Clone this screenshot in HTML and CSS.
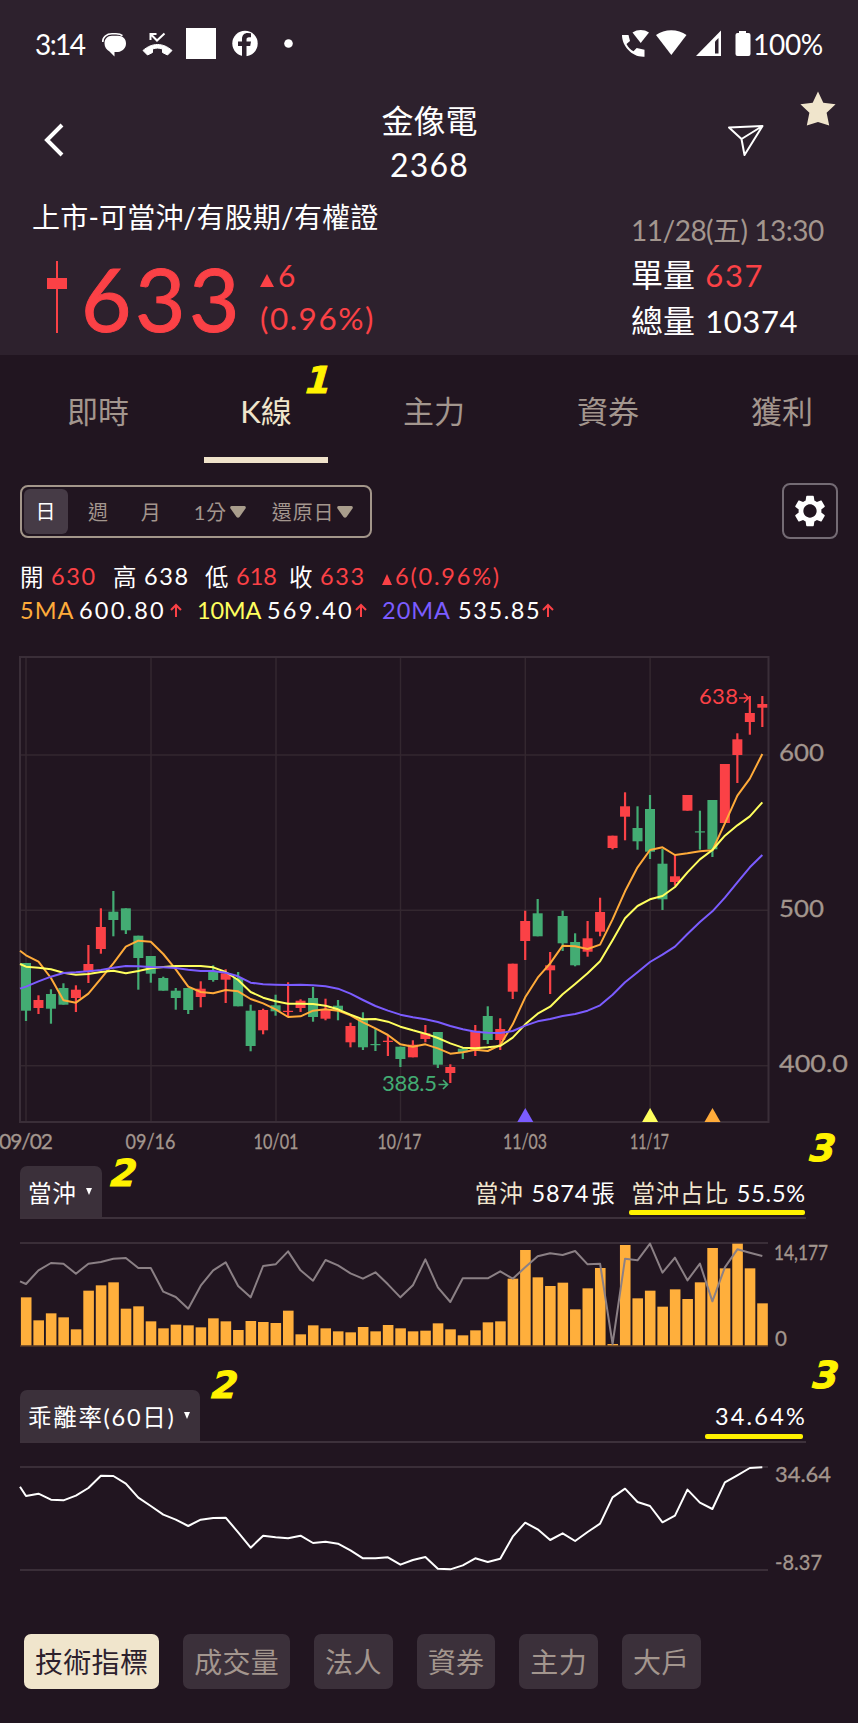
FILE: index.html
```html
<!DOCTYPE html>
<html lang="zh-Hant">
<head>
    <meta charset="UTF-8">
    <meta name="viewport" content="width=device-width, initial-scale=1.0">
    <title>金像電 2368</title>
    <link rel="stylesheet" href="styles.css">
</head>
<body>
    <div class="app">
        <header class="header">
            <div class="status-bar">
                <span class="clock">3:14</span>
                <svg class="status-left" width="200" height="34" viewBox="98 28 200 34">
                    <path d="M102.800 43c-.5-5 4-8.200 9.200-8.200h4c3 0 5 .6 6.500 1.800" fill="none" stroke="#fff" stroke-width="1.600"/>
                    <path d="M112 36.800h6c5 0 8 3.200 8 7.700s-3.500 8-8 8.500h-3.500v4.500l-5-5c-3-1.500-5-4.500-5-8 0-4.500 3-7.700 7.500-7.700z" fill="#fff"/>
                    <path d="M143 51.500c9-8 20-8 29 0l-4.500 4.500-5-2.500v-3.500c-3.500-1.200-6.500-1.200-10 0v3.500l-5 2.500z" fill="#fff" stroke="#fff" stroke-width="1"/>
                    <path d="M150.500 41v-6h6M151 35.500l6 6 7.500-7" fill="none" stroke="#fff" stroke-width="2"/>
                    <rect x="186" y="29" width="30" height="31" fill="#fff"/>
                    <circle cx="245" cy="44.500" r="12.700" fill="#fff"/>
                    <path d="M242 58V47h-4v-4.500h4v-2.500c0-4 2.500-6 5.500-6l3.500.3v4h-2c-1.800 0-2.500 1-2.500 2.200v2h4.500l-.8 4.500h-3.700v11z" fill="#2d212d"/>
                    <circle cx="288.500" cy="44.500" r="4.300" fill="#fff"/>
                </svg>
                <svg class="status-right" width="132" height="34" viewBox="620 28 132 34">
                    <path d="M622 36h6.500l1.500 6-3.500 3c1.500 3.300 4 5.800 7 7.300l3.200-3.300 7.800 1.700v7C632 58.500 622 47 622 36z" fill="#fff"/>
                    <path d="M632.500 33.500c5-3.300 11.500-3.300 16.500 0L640.700 44z" fill="#fff"/>
                    <path d="M656 36c8.500-6.300 22-6.300 30.500 0L671.300 56z" fill="#fff"/>
                    <path d="M696 57l25-25.500V57z" fill="#fff"/>
                    <path d="M715 42.500l3.500-3.500v15.500H715z" fill="#2d212d"/>
                    <path d="M739 32h7v2h2.500q2 0 2 2v19q0 2-2 2h-11q-2 0-2-2V36q0-2 2-2h1.500z" fill="#fff"/>
                </svg>
                <span class="battery">100%</span>
            </div>

            <div class="title-bar">
                <svg class="icon-back" width="24" height="36" viewBox="0 0 24 36">
                    <path d="M20 3L5 18l15 15" fill="none" stroke="#fff" stroke-width="4"/>
                </svg>
                <h1 class="title">金像電<span class="code">2368</span></h1>
                <svg class="icon-send" width="38" height="34" viewBox="0 0 38 34">
                    <path d="M2 3.500L35.500 2 17.500 31 14.500 15zM14.500 15L35.500 2" fill="none" stroke="#fff" stroke-width="2" stroke-linejoin="round"/>
                </svg>
                <svg class="icon-star" width="36" height="36" viewBox="0 0 36 36">
                    <path d="M18 .5l5.300 11.300 12.300 1.400-9 8.500 2.600 12.800L18 31 6.800 34.500l2.600-12.800-9-8.500 12.300-1.400z" fill="#f0e5cc"/>
                </svg>
            </div>

            <div class="quote">
                <div class="quote-main">
                    <div class="market">上市-可當沖/有股期/有權證</div>
                    <div class="price-row">
                        <svg class="price-candle" width="20" height="72" viewBox="0 0 20 72">
                            <path d="M9 0h2v72H9zM0 17h20v11H0z" fill="#fb4146"/>
                        </svg>
                        <span class="price">633</span>
                        <div class="change">
                            <div class="change-value"><i class="tri-up"></i>6</div>
                            <div class="change-rate">(0.96%)</div>
                        </div>
                    </div>
                </div>
                <div class="quote-side">
                    <div class="date">11/28(五) 13:30</div>
                    <div class="volume">單量 <span class="num single up">637</span></div>
                    <div class="volume">總量 <span class="num">10374</span></div>
                </div>
            </div>
        </header>

        <nav class="tabs">
            <span class="tab">即時</span>
            <span class="tab active">K線</span>
            <span class="tab">主力</span>
            <span class="tab">資券</span>
            <span class="tab">獲利</span>
        </nav>
        <span class="note note-kline">1</span>

        <div class="toolbar">
            <div class="periods">
                <span class="period selected">日</span>
                <span class="period">週</span>
                <span class="period">月</span>
                <span class="period minute">1分<svg width="16" height="12" viewBox="0 0 16 12"><path d="M1.500 0h13q2 .5 1 2.500L9.500 11q-1.500 1.500-3 0L.5 2.500Q-.5.500 1.500 0z"/></svg></span>
                <span class="period">還原日<svg width="16" height="12" viewBox="0 0 16 12"><path d="M1.500 0h13q2 .5 1 2.500L9.500 11q-1.500 1.500-3 0L.5 2.500Q-.5.500 1.500 0z"/></svg></span>
            </div>
            <div class="settings">
                <svg width="38" height="38" viewBox="0 0 24 24"><path fill="#fff" d="M19.140 12.940c.04-.3.060-.61.060-.94 0-.32-.02-.64-.07-.94l2.030-1.580c.18-.14.23-.41.120-.61l-1.920-3.320c-.12-.22-.37-.29-.59-.22l-2.390.96c-.5-.38-1.030-.7-1.620-.94l-.36-2.540c-.04-.24-.24-.41-.48-.41h-3.840c-.24 0-.43.170-.47.410l-.36 2.540c-.59.240-1.130.570-1.620.940l-2.390-.96c-.22-.08-.47 0-.59.220L2.740 8.870c-.12.210-.08.470.120.610l2.030 1.580c-.05.300-.09.630-.09.940s.020.640.070.940l-2.030 1.580c-.18.140-.23.410-.12.610l1.920 3.320c.12.220.37.290.59.220l2.390-.96c.5.380 1.030.700 1.620.940l.36 2.540c.05.240.24.410.48.410h3.840c.24 0 .44-.17.470-.41l.36-2.540c.59-.24 1.130-.56 1.620-.94l2.390.96c.22.080.47 0 .59-.22l1.920-3.320c.12-.22.070-.47-.12-.61l-2.010-1.580zM12 16.200c-2.300 0-4.200-1.900-4.200-4.200s1.900-4.200 4.200-4.200 4.200 1.900 4.200 4.200-1.900 4.200-4.200 4.200z"/></svg>
            </div>
        </div>

        <div class="legend">
            <div class="ohlc">
                <span>開</span><span class="up">630</span>
                <span>高</span><span>638</span>
                <span>低</span><span class="up tight">618</span>
                <span>收</span><span class="up">633</span>
                <span class="up diff"><i class="tri-up small"></i>6(0.96%)</span>
            </div>
            <div class="ma">
                <span class="ma5">5MA</span><span class="value">600.80</span><svg width="12" height="15" viewBox="0 0 12 15"><path d="M6 14V2M1 7l5-5 5 5"/></svg>
                <span class="ma10">10MA</span><span class="value">569.40</span><svg width="12" height="15" viewBox="0 0 12 15"><path d="M6 14V2M1 7l5-5 5 5"/></svg>
                <span class="ma20">20MA</span><span>535.85</span><svg width="12" height="15" viewBox="0 0 12 15"><path d="M6 14V2M1 7l5-5 5 5"/></svg>
            </div>
        </div>

        <svg class="chart" id="kline" width="858" height="520" viewBox="0 640 858 520">
            <path class="grid" d="M20 755H769M20 910.300H769M20 1065.700H769M26 657V1122M151 657V1122M276 657V1122M400.500 657V1122M525.300 657V1122M650.100 657V1122"/>
            <rect class="frame" x="20" y="657" width="748.500" height="465"/>
            <g id="candles"></g>
            <path class="line ma5" id="ma5"/>
            <path class="line ma10" id="ma10"/>
            <path class="line ma20" id="ma20"/>
            <path d="M525.300 1108l8 14h-16z" fill="#7b5cff"/>
            <path d="M650.100 1108l8 14h-16z" fill="#ffff5e"/>
            <path d="M712.500 1108l8 14h-16z" fill="#ffab3a"/>
            <text class="mark up" x="699" y="704" textLength="39">638</text>
            <path class="arrow-red" d="M739 698h9M744 693.500l4.500 4.500-4.500 4.500"/>
            <text class="mark low" x="382" y="1091" textLength="55">388.5</text>
            <path class="arrow-green" d="M438.500 1084.500h9M443 1080l4.500 4.500-4.500 4.500"/>
            <g class="axis price-axis">
                <text x="779" y="761" textLength="45" lengthAdjust="spacingAndGlyphs">600</text>
                <text x="779" y="917" textLength="45" lengthAdjust="spacingAndGlyphs">500</text>
                <text x="779" y="1072" textLength="69" lengthAdjust="spacingAndGlyphs">400.0</text>
            </g>
            <g class="axis date-axis">
                <text x="-1" y="1149" textLength="54">09/02</text>
                <text x="125.500" y="1149" textLength="50" lengthAdjust="spacingAndGlyphs">09/16</text>
                <text x="253.500" y="1149" textLength="45" lengthAdjust="spacingAndGlyphs">10/01</text>
                <text x="377.500" y="1149" textLength="44" lengthAdjust="spacingAndGlyphs">10/17</text>
                <text x="503" y="1149" textLength="44" lengthAdjust="spacingAndGlyphs">11/03</text>
                <text x="630" y="1149" textLength="39" lengthAdjust="spacingAndGlyphs">11/17</text>
            </g>
        </svg>
        <span class="note note-price">3</span>

        <div class="panel-head">
            <div class="selector">當沖<i class="tri-down"></i></div>
            <div class="readout">
                <span class="label">當沖</span><span class="count">5874<b>張</b></span>
                <span class="marked day-ratio"><span class="label">當沖占比</span><span>55.5%</span></span>
            </div>
            <span class="note note-day">2</span>
        </div>
        <svg class="chart" width="858" height="171" viewBox="0 1219 858 171">
            <path class="frame" d="M20 1243H768"/>
            <path d="M20 1346H768" stroke="#5b3d28" stroke-width="1.500"/>
            <g id="bars"></g>
            <path class="line ratio" id="ratio"/>
            <g class="axis sub-axis">
                <text x="774" y="1260" textLength="54" lengthAdjust="spacingAndGlyphs">14,177</text>
                <text x="775" y="1346">0</text>
            </g>
        </svg>

        <div class="panel-head">
            <div class="selector wide">乖離率(60日)<i class="tri-down"></i></div>
            <div class="readout"><span class="marked bias-ratio">34.64%</span></div>
            <span class="note note-bias">2</span>
            <span class="note note-bias-value">3</span>
        </div>
        <svg class="chart" width="858" height="191" viewBox="0 1443 858 191">
            <path class="frame" d="M20 1467H768M20 1570H768"/>
            <path class="line bias" id="bias"/>
            <g class="axis sub-axis">
                <text x="775" y="1482" textLength="56" lengthAdjust="spacingAndGlyphs">34.64</text>
                <text x="775" y="1570" textLength="47" lengthAdjust="spacingAndGlyphs">-8.37</text>
            </g>
        </svg>

        <div class="chips">
            <span class="chip on">技術指標</span>
            <span class="chip">成交量</span>
            <span class="chip">法人</span>
            <span class="chip">資券</span>
            <span class="chip">主力</span>
            <span class="chip">大戶</span>
        </div>
    </div>
    <script src="script.js"></script>
</body>
</html>
```
FILE: styles.css
```css
body {
    margin: 0;
    background: #211520;
    color: #fff;
    font-family: Lato, "Noto Sans CJK TC", sans-serif;
}
.app {
    position: relative;
    width: 858px;
    height: 1723px;
    overflow: hidden;
}
.up {
    color: #fb4146;
}

/* header */
.header {
    height: 355px;
    background: #2d212d;
}
.status-bar {
    display: flex;
    align-items: center;
    height: 88px;
    padding: 0 0 0 35px;
    box-sizing: border-box;
}
.clock {
    width: 63px;
    font-size: 28px;
    letter-spacing: -1.6px;
}
.status-right {
    margin-left: 322px;
}
.battery {
    margin-left: 1px;
    font-size: 28px;
    letter-spacing: -0.3px;
}
.title-bar {
    position: relative;
    display: flex;
    align-items: center;
    justify-content: space-between;
    height: 104px;
    padding: 0 93px 0 42px;
}
.icon-send {
    margin-top: 1px;
}
.title {
    margin: 0 0 0 66px;
    padding-top: 5px;
    font-size: 32px;
    font-weight: 400;
    line-height: 44px;
    text-align: center;
}
.code {
    display: block;
    letter-spacing: 1.2px;
}
.icon-star {
    position: absolute;
    left: 800px;
    top: 3px;
}
.quote {
    display: flex;
    justify-content: space-between;
    height: 163px;
    padding: 0 0 0 32px;
}
.market {
    height: 50px;
    font-size: 28px;
    line-height: 50px;
    letter-spacing: 0.2px;
    white-space: nowrap;
}
.price-row {
    display: flex;
    align-items: center;
    height: 110px;
    padding-left: 15px;
}
.price {
    margin: 3px 0 0 14px;
    width: 161px;
    font-size: 87px;
    line-height: 100px;
    letter-spacing: 3.5px;
    color: #fb4146;
    -webkit-text-stroke: 1px #fb4146;
}
.change {
    margin-left: 18px;
    color: #fb4146;
    line-height: 43px;
}
.change-value {
    font-size: 30px;
}
.change-rate {
    font-size: 31.5px;
    letter-spacing: 1.5px;
}
.tri-up {
    display: inline-block;
    margin-right: 4px;
    border: solid transparent;
    border-width: 0 7px 13px;
    border-bottom-color: #fb4146;
}
.tri-up.small {
    border-width: 0 5px 11px;
    margin-right: 3px;
}
.quote-side {
    width: 227px;
    padding-top: 16px;
}
.date {
    height: 44px;
    font-size: 28px;
    line-height: 44px;
    letter-spacing: -0.5px;
    color: #a3968e;
    white-space: nowrap;
}
.volume {
    height: 46px;
    font-size: 32px;
    line-height: 46px;
}
.volume .num {
    margin-left: 2px;
    font-size: 31px;
    letter-spacing: 0.6px;
}
.volume .single {
    letter-spacing: 1.7px;
}

/* tabs */
.tabs {
    display: flex;
    gap: 44px;
    height: 108px;
    padding-left: 36px;
    font-size: 31px;
    line-height: 112px;
    color: #a3968e;
}
.tab {
    flex: none;
    width: 124px;
    text-align: center;
    box-sizing: border-box;
}
.tab:nth-child(n+4) {
    margin-left: 6px;
}
.tab.active {
    color: #f0e5cc;
    border-bottom: 6px solid #f0e2ca;
}

/* toolbar */
.toolbar {
    display: flex;
    justify-content: space-between;
    align-items: center;
    padding: 20px 20px 0;
}
.periods {
    display: flex;
    align-items: center;
    width: 352px;
    height: 53px;
    padding: 2px;
    border: 2px solid #a3968a;
    border-radius: 8px;
    box-sizing: border-box;
    font-size: 20px;
    letter-spacing: 0.8px;
    color: #a3968e;
}
.period {
    flex: none;
    margin-right: 32px;
    white-space: nowrap;
}
.period.minute {
    margin-right: 26px;
}
.period.selected {
    width: 44px;
    height: 45px;
    margin-right: 20px;
    border-radius: 6px;
    background: #463b46;
    color: #fff;
    line-height: 45px;
    text-align: center;
}
.period svg {
    margin-left: 3px;
    fill: #a99d8c;
    vertical-align: 2px;
}
.settings {
    display: flex;
    align-items: center;
    justify-content: center;
    width: 52px;
    height: 52px;
    border: 2px solid #746b74;
    border-radius: 8px;
}

/* legend */
.legend {
    height: 101px;
    font-size: 23.5px;
    letter-spacing: 1.6px;
}
.ohlc, .ma {
    display: grid;
    align-items: center;
    height: 34px;
    padding-left: 20px;
    white-space: nowrap;
}
.ohlc {
    grid-template-columns: 31px 62px 31px 61px 31px 53px 31px 62px auto;
    padding-top: 20px;
}
.ohlc .tight {
    letter-spacing: 0;
}
.ohlc .diff {
    letter-spacing: 1.8px;
}
.ma {
    grid-template-columns: 59px 91px 27px 70px 88px 27px 76px 84px auto;
}
.ma .ma5 {
    letter-spacing: 1px;
}
.ma .ma10 {
    letter-spacing: -0.2px;
}
.ma .ma20 {
    letter-spacing: 1px;
}
.ma .value {
    letter-spacing: 2.2px;
}
.ma svg {
    fill: none;
    stroke: #fb4146;
    stroke-width: 2;
}
.ma5 { color: #ffab3a; }
.ma10 { color: #ffff5e; }
.ma20 { color: #7b5cff; }

/* charts */
.chart {
    display: block;
}
.grid {
    stroke: #33272f;
    stroke-width: 1.5;
}
.frame {
    fill: none;
    stroke: #3a2e38;
    stroke-width: 2;
}
.line {
    fill: none;
    stroke: currentColor;
    stroke-width: 2;
    stroke-linejoin: round;
}
.ratio { color: #8b8085; }
.bias { color: #fff; }
.red { fill: #fb4146; }
.green { fill: #43ac73; }
.bar { fill: #ffaf3c; }
.mark {
    font-size: 22px;
}
.mark.up { fill: #fb4146; }
.mark.low { fill: #43ac73; }
.arrow-red, .arrow-green {
    fill: none;
    stroke: #fb4146;
    stroke-width: 1.7;
}
.arrow-green { stroke: #43ac73; }
.axis {
    fill: #a3968e;
    stroke: #a3968e;
    stroke-width: 0.3;
}
.price-axis { font-size: 23.5px; }
.date-axis { font-size: 21px; }
.sub-axis { font-size: 20.5px; }

/* indicator panels */
.panel-head {
    position: relative;
    display: flex;
    justify-content: space-between;
    height: 51px;
    width: 786px;
    margin: 6px 0 0 20px;
    border-bottom: 2px solid #3d313b;
}
.chart + .panel-head {
    margin-top: 0;
}
.selector {
    display: flex;
    align-items: center;
    padding: 0 10px 0 8px;
    border-radius: 7px 7px 0 0;
    background: #3b303a;
    font-size: 23.5px;
    letter-spacing: 0.7px;
}
.selector.wide {
    letter-spacing: 1.7px;
}
.tri-down {
    margin-left: 10px;
    border: solid transparent;
    border-width: 7px 3.5px 0;
    border-top-color: #fff;
}
.wide .tri-down {
    margin-left: 9px;
}
.readout {
    display: flex;
    align-items: center;
    font-size: 23.5px;
    letter-spacing: 0.8px;
    white-space: nowrap;
}
.label {
    margin-right: 8px;
    color: #f0e5cc;
}
.count b {
    margin-left: 2px;
    font-weight: 400;
}
.marked {
    position: relative;
    margin-left: 16px;
}
.marked::after {
    content: "";
    position: absolute;
    left: -3px;
    right: 1px;
    bottom: -6px;
    height: 5px;
    border-radius: 2px;
    background: #fff200;
}
.bias-ratio {
    letter-spacing: 2.2px;
    margin-right: -1px;
}
.bias-ratio::after {
    left: -10px;
    right: 4px;
    bottom: -9px;
}

/* step numbers laid over the screen */
.note {
    position: absolute;
    color: #fff200;
    font: italic bold 37px/40px "DejaVu Sans", sans-serif;
    -webkit-text-stroke: 1px #fff200;
    transform: skewX(-5deg);
}
.note-kline { left: 306px; top: 361px; }
.note-price { left: 810px; top: 1129px; }
.note-day { left: 91px; top: -12px; }
.note-bias { left: 192px; top: -24px; }
.note-bias-value { left: 793px; top: -34px; }

/* bottom chips */
.chips {
    display: flex;
    gap: 24px;
    padding-left: 24px;
}
.chip {
    height: 55px;
    padding: 0 11px;
    border-radius: 7px;
    background: #3b303a;
    color: #a3968e;
    font-size: 28px;
    line-height: 57px;
    letter-spacing: 0.3px;
    white-space: nowrap;
}
.chip.on {
    background: #f0e5cc;
    color: #2d212d;
}
```
FILE: script.js
```js
const SVG_NS = 'http://www.w3.org/2000/svg';
const STEP = 12.48;
const xAt = i => 26 + i * STEP;

// [wick top, body top, body bottom, wick bottom, r = up / g = down]
const candles = [
    [963, 963, 1010.7, 1021, 'g'], [995.3, 1000, 1008, 1014, 'r'], [989.3, 994, 1008.7, 1023.7, 'g'],
    [983.3, 988, 1004.7, 1004.7, 'g'], [985.3, 989.7, 998, 1012, 'r'], [945, 964, 972, 983, 'r'],
    [908.3, 927, 949, 953.7, 'r'], [891, 911.7, 920, 936.3, 'g'], [908.3, 908.3, 930.3, 934, 'g'],
    [935.7, 935.7, 958, 989.7, 'g'], [956, 956, 973.7, 982.7, 'g'], [976.7, 978, 990.7, 990.7, 'g'],
    [988, 990.7, 998, 1009.7, 'g'], [988, 988, 1010, 1014, 'g'], [981.3, 988.7, 997, 1007.3, 'r'],
    [965.3, 971.3, 980, 981.7, 'g'], [969.3, 973.3, 979.7, 1003, 'r'], [972, 978, 1006.3, 1006.3, 'g'],
    [1004.7, 1010.7, 1046, 1051.3, 'g'], [1008.7, 1010, 1030.3, 1034.3, 'r'], [994.7, 1005.3, 1011.3, 1015.7, 'g'],
    [982.3, 1010.8, 1012, 1016, 'r'], [999.3, 1000.7, 1008, 1012, 'r'], [987, 998, 1017, 1021.7, 'g'],
    [998.7, 1009.3, 1018.7, 1020.3, 'r'], [1000, 1005.7, 1010, 1020.3, 'g'], [1022.7, 1026, 1042.3, 1047.3, 'r'],
    [1012.3, 1019, 1047.3, 1050, 'g'], [1028, 1044, 1045.2, 1051, 'g'], [1035, 1040.7, 1042, 1056, 'r'],
    [1046.7, 1046.7, 1059, 1067, 'g'], [1040.3, 1044.7, 1057.3, 1057.3, 'r'], [1025, 1033.3, 1039, 1042.3, 'r'],
    [1032, 1032, 1064.7, 1068, 'g'], [1064.3, 1067, 1073, 1083, 'r'], [1047.3, 1048.7, 1052.3, 1059, 'g'],
    [1025, 1030.7, 1050, 1056, 'r'], [1006.3, 1016, 1040, 1044, 'g'], [1018.3, 1029, 1040, 1050, 'r'],
    [963.7, 963.7, 991.7, 999, 'r'], [910.7, 921, 941, 960, 'r'], [899, 913.3, 936.3, 936.3, 'g'],
    [952, 965.3, 970.3, 994, 'r'], [910.7, 916, 943.3, 951, 'g'], [933.3, 942, 965.3, 966.3, 'g'],
    [921, 938.3, 951.7, 956.7, 'r'], [897.7, 912, 931.7, 936.3, 'r'], [835.7, 835.7, 848, 849.3, 'r'],
    [792.3, 806.3, 816.7, 840.3, 'r'], [806.3, 828, 841.3, 849.7, 'g'], [795, 809, 851.7, 859, 'g'],
    [849, 863.7, 899.3, 910, 'g'], [854.7, 876.3, 882, 885.7, 'r'], [795, 795, 810.7, 810.7, 'r'],
    [810.7, 831.3, 832.5, 849.7, 'g'], [800, 800, 849.3, 857, 'g'], [764, 764, 823, 823, 'r'],
    [733.3, 739.3, 755, 783, 'r'], [696, 713, 722, 734.7, 'r'], [696, 704, 707.7, 727, 'r']
];

// Lines are kept as offsets in thirds of a pixel; the first value is the left edge of the plot
const ma5 = [932, 946, 965, 1014, 1081, 1088, 1061, 1016, 970, 920, 902, 905, 942, 988, 1040, 1056, 1060, 1050, 1054, 1077, 1090,
    1108, 1131, 1129, 1112, 1108, 1112, 1126, 1147, 1165, 1185, 1213, 1220, 1213, 1225, 1241, 1237, 1229, 1233, 1215, 1153,
    1072, 1013, 970, 917, 919, 927, 914, 838, 754, 682, 630, 622, 645, 640, 634, 631, 550, 467, 416, 342];
const ma10 = [972, 980, 983, 988, 998, 1004, 1002, 996, 992, 1000, 993, 985, 981, 978, 978, 978, 982, 996, 1020, 1056, 1073,
    1084, 1091, 1091, 1092, 1097, 1108, 1124, 1138, 1137, 1145, 1160, 1171, 1181, 1194, 1210, 1223, 1225, 1222, 1218, 1193,
    1153, 1121, 1100, 1063, 1032, 1000, 964, 901, 835, 798, 778, 768, 741, 697, 658, 630, 587, 556, 529, 487];
const ma20 = [1046, 1040, 1024, 1010, 999, 997, 994, 990, 983, 978, 979, 981, 982, 984, 989, 993, 993, 998, 1009, 1028, 1033,
    1034, 1035, 1034, 1036, 1039, 1046, 1061, 1080, 1098, 1112, 1124, 1132, 1138, 1146, 1158, 1168, 1175, 1178, 1179, 1173,
    1157, 1144, 1137, 1128, 1122, 1112, 1096, 1064, 1027, 997, 966, 944, 920, 882, 846, 814, 773, 727, 682, 645];
const barTops = [472, 541, 520, 532, 568, 452, 436, 427, 506, 499, 544, 565, 554, 556, 562, 535, 544, 570, 543, 546,
    549, 512, 583, 556, 565, 574, 577, 561, 574, 555, 565, 574, 572, 550, 568, 586, 571, 547, 544, 416,
    330, 412, 438, 428, 508, 445, 384, 612, 315, 475, 452, 500, 448, 477, 427, 324, 385, 311, 385, 490];
const ratio = [424, 432, 391, 369, 371, 401, 371, 366, 356, 354, 384, 384, 455, 471, 506, 437, 391, 367, 438, 472, 378,
    373, 334, 391, 422, 360, 376, 400, 416, 397, 433, 472, 436, 358, 442, 486, 415, 415, 415, 394, 416,
    382, 349, 340, 345, 333, 373, 371, 612, 356, 361, 311, 398, 353, 421, 371, 484, 382, 328, 338, 348];
const bias = [380, 408, 401, 419, 421, 407, 384, 347, 348, 371, 413, 438, 464, 479, 498, 479, 474, 473, 517, 563, 527,
    532, 535, 527, 549, 545, 551, 571, 595, 595, 592, 614, 600, 591, 626, 628, 616, 595, 606, 596, 530,
    488, 508, 540, 520, 543, 516, 491, 412, 386, 426, 438, 487, 467, 389, 428, 447, 367, 346, 324, 322];

function addRect(parent, cls, x, y, width, height) {
    const rect = document.createElementNS(SVG_NS, 'rect');
    rect.setAttribute('class', cls);
    rect.setAttribute('x', x);
    rect.setAttribute('y', y);
    rect.setAttribute('width', width);
    rect.setAttribute('height', height);
    parent.appendChild(rect);
}

function drawLine(id, values, top) {
    const points = values.map((v, i) => `${i === 0 ? 20 : xAt(i - 1)} ${top + v / 3}`);
    document.getElementById(id).setAttribute('d', 'M' + points.join('L'));
}

const candleGroup = document.getElementById('candles');
candles.forEach(([high, top, bottom, low, side], i) => {
    const cls = side === 'r' ? 'red' : 'green';
    addRect(candleGroup, cls, xAt(i) - 1.1, high, 2.2, low - high);
    addRect(candleGroup, cls, xAt(i) - 5, top, 10, bottom - top);
});

const barGroup = document.getElementById('bars');
barTops.forEach((v, i) => {
    const y = 1140 + v / 3;
    addRect(barGroup, 'bar', xAt(i) - 5.1, y, 10.6, 1345.3 - y);
});

drawLine('ma5', ma5, 640);
drawLine('ma10', ma10, 640);
drawLine('ma20', ma20, 640);
drawLine('ratio', ratio, 1140);
drawLine('bias', bias, 1360);
```
